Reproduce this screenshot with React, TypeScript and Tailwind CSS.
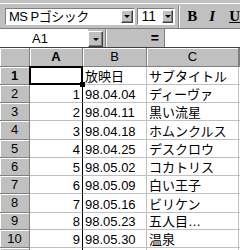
import React from "react";

const SANS = { fontFamily: '"Liberation Sans", Arial, sans-serif' };
const JP = { fontFamily: '"Liberation Sans", "Noto Sans CJK JP", sans-serif' };

const rows: [string, string, string][] = [
  ["1", "98.04.04", "ディーヴァ"],
  ["2", "98.04.11", "黒い流星"],
  ["3", "98.04.18", "ホムンクルス"],
  ["4", "98.04.25", "デスクロウ"],
  ["5", "98.05.02", "コカトリス"],
  ["6", "98.05.09", "白い王子"],
  ["7", "98.05.16", "ビリケン"],
  ["8", "98.05.23", "五人目…"],
  ["9", "98.05.30", "温泉"],
];

const heights = [18, 18, 18, 19, 18, 18, 18, 19, 17, 18];

function Arrow() {
  return <div className="w-0 h-0 border-x-[3px] border-x-transparent border-t-[3px] border-t-black" />;
}

function DropBtn({ cls }: { cls: string }) {
  return (
    <div
      className={`${cls} bg-[#c0c0c0] border-t border-l border-t-white border-l-white border-b border-r border-b-[#404040] border-r-[#404040] shadow-[inset_-1px_-1px_0_#808080] flex items-center justify-center`}
    >
      <Arrow />
    </div>
  );
}

const hdr =
  "bg-[#c0c0c0] border-r border-b border-r-[#808080] border-b-[#808080] shadow-[inset_1px_1px_0_#fff] flex items-center justify-center text-[13px] text-black";

export default function App() {
  return (
    <div className="w-[240px] h-[250px] overflow-hidden bg-[#c0c0c0] text-black" style={SANS}>
      {/* toolbar */}
      <div className="h-[28px] pt-[3px]">
        <div className="h-[25px] border-t border-white flex items-start pt-[4px]">
          <div className="ml-[5px] w-[131px] h-[17px] bg-white border-t border-l border-t-[#808080] border-l-[#808080] border-b border-r border-b-white border-r-white flex items-center">
            <span className="flex-1 pl-[3px] text-[13px] leading-[15px] tracking-[-0.5px]" style={JP}>
              MS Pゴシック
            </span>
            <DropBtn cls="w-[12px] h-[13px] mr-[1px]" />
          </div>
          <div className="ml-[2px] w-[38px] h-[17px] bg-white border-t border-l border-t-[#808080] border-l-[#808080] border-b border-r border-b-white border-r-white flex items-center">
            <span className="flex-1 pl-[3px] text-[14px] leading-[15px]">11</span>
            <DropBtn cls="w-[11px] h-[13px] mr-[1px]" />
          </div>
          <div className="ml-[3px] -mt-[2px] w-[2px] h-[22px] border-l border-l-[#808080] border-r border-r-white" />
          <span
            className="ml-[7px] text-[15px] leading-[17px] font-bold"
            style={{ fontFamily: '"Liberation Serif", serif' }}
          >
            B
          </span>
          <span
            className="ml-[12px] text-[15px] leading-[17px] font-bold italic"
            style={{ fontFamily: '"Liberation Serif", serif' }}
          >
            I
          </span>
          <span
            className="ml-[14px] text-[15px] leading-[17px] font-bold underline"
            style={{ fontFamily: '"Liberation Serif", serif' }}
          >
            U
          </span>
        </div>
      </div>

      {/* formula bar */}
      <div className="h-[20px] flex border-t border-t-[#808080] border-b border-b-[#404040]">
        <div className="w-[88px] bg-white flex items-center justify-center pr-[8px] text-[13px] leading-[15px]">
          A1
        </div>
        <DropBtn cls="w-[15px] h-[16px] mt-[2px]" />
        <div className="ml-[2px] w-[2px] h-full border-l border-l-[#808080] border-r border-r-white" />
        <div className="w-[57px] flex items-center justify-end pr-[5px] text-[14px] font-bold leading-[15px]">=</div>
        <div className="flex-1 bg-white border-l border-l-[#808080]" />
      </div>

      {/* grid */}
      <div className="grid grid-cols-[30px_53px_64px_92px_1fr] bg-white">
        <div className={`${hdr} h-[19px]`} />
        <div className={`${hdr} h-[19px] font-bold`}>A</div>
        <div className={`${hdr} h-[19px]`}>B</div>
        <div className={`${hdr} h-[19px]`}>C</div>
        <div className={`${hdr} h-[19px]`} />

        {/* row 1 */}
        <div className={`${hdr} font-bold`} style={{ height: heights[0] }}>
          1
        </div>
        <div className="relative border-r border-b border-[#c0c0c0]">
          <div className="absolute -left-[1px] -top-[1px] -right-[1px] -bottom-[1px] border-2 border-black" />
          <div className="absolute -right-[3px] -bottom-[3px] w-[5px] h-[5px] bg-black" />
        </div>
        <div className="border-r border-b border-[#c0c0c0] flex items-end pl-[2px] text-[13px] leading-[15px]" style={JP}>
          放映日
        </div>
        <div className="border-r border-b border-[#c0c0c0] flex items-end pl-[2px] text-[13px] leading-[15px]" style={JP}>
          サブタイトル
        </div>
        <div className="border-b border-[#c0c0c0]" />

        {rows.map((r, i) => (
          <React.Fragment key={i}>
            <div className={hdr} style={{ height: heights[i + 1] }}>
              {i + 2}
            </div>
            <div className="border-r border-r-black border-b border-b-[#c0c0c0] flex items-end justify-end pr-[2px] text-[13px] leading-[15px]">
              {r[0]}
            </div>
            <div className="border-r border-b border-[#c0c0c0] flex items-end pl-[2px] text-[13px] leading-[15px]">
              {r[1]}
            </div>
            <div className="border-r border-b border-[#c0c0c0] flex items-end pl-[2px] text-[13px] leading-[15px]" style={JP}>
              {r[2]}
            </div>
            <div className="border-b border-[#c0c0c0]" />
          </React.Fragment>
        ))}

        <div className={`${hdr} h-[18px]`} />
        <div className="border-r border-r-black" />
        <div className="border-r border-[#c0c0c0]" />
        <div className="border-r border-[#c0c0c0]" />
        <div />
      </div>
    </div>
  );
}
